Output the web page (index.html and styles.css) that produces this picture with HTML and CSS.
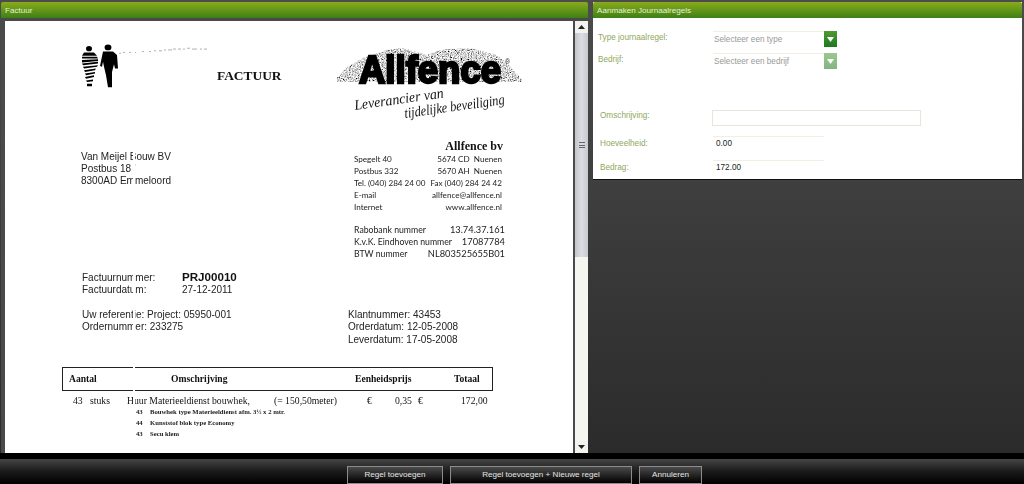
FILE: index.html
```html
<!DOCTYPE html>
<html lang="nl">
<head>
<meta charset="utf-8">
<title>Aanmaken Journaalregels</title>
<link rel="stylesheet" href="styles.css">
</head>
<body>
<div class="main">
  <section class="panel panel-doc">
    <h2 class="panel-title">Factuur</h2>
    <div class="viewer">
      <div class="doc">
        <div class="doc-head">
          <svg class="figures" width="140" height="44" viewBox="0 0 140 52" preserveAspectRatio="none">
            <g fill="#000">
              <circle cx="8" cy="5.5" r="3"/>
              <path d="M3 10 L13 10 L16 14 L1 14Z"/>
              <path d="M1 15h15l1 2h-16zM1 19l16-1v2l-16 2zM1 23l16-2 0 2-15 2zM2 27l15-2-1 2-13 2zM3 31l12-2-1 2-10 2zM4 35l10-2 0 2-9 2zM4 39l9-2 0 2-8 2zM5 43l7-1 0 2-6 1zM6 47h5v3h-5z"/>
              <circle cx="27" cy="4" r="3.4"/>
              <path d="M22 9 L32 9 L36 13 L37 29 L34 29 L33 24 L31 33 L31 51 L27 51 L25 37 L23 27 L22 21 L21 27 L19 26 Z"/>
            </g>
            <path d="M38 11h2m2-1h2m4 0h2m4 0h1m6-1h2m5 0h2m3-1h2m3 0h3m2-1h2m2 0h4m1-1h3m2 0h3m2 0h2m2-1h3m2 1h5m3 0h2m2 0h3" stroke="#aaa" stroke-width="1" fill="none"/>
          </svg>
          <div class="doc-title">FACTUUR</div>
          <svg class="logo" width="192" height="86" viewBox="0 0 192 86">
            <defs>
              <filter id="grit" x="0" y="0" width="100%" height="100%">
                <feTurbulence type="fractalNoise" baseFrequency="0.9" numOctaves="2" seed="4" result="n"/>
                <feColorMatrix in="n" type="matrix" values="2.4 0 0 0 -0.55  2.4 0 0 0 -0.55  2.4 0 0 0 -0.55  0 0 0 0 1" result="g"/>
                <feComposite in="g" in2="SourceAlpha" operator="in"/>
              </filter>
            </defs>
            <path d="M2 33 L12 22 L28 13 L52 5 L68 3 L92 10 L105 5 L135 3 L162 10 L175 21 L187 35 L187 37 L2 37Z" fill="#888" filter="url(#grit)"/>
            <text class="logo-name" x="24" y="37.5" textLength="142" lengthAdjust="spacingAndGlyphs">Allfence</text>
            <text class="logo-reg" x="170" y="19">®</text>
            <text class="logo-tag" x="20" y="65" textLength="90" lengthAdjust="spacingAndGlyphs" transform="rotate(-8 20 65)">Leverancier van</text>
            <text class="logo-tag" x="70" y="73" textLength="101" lengthAdjust="spacingAndGlyphs" transform="rotate(-8 70 73)">tijdelijke beveiliging</text>
          </svg>
        </div>
        <div class="parties">
          <div class="address">
            <p>Van Meijel Bouw BV</p>
            <p>Postbus 18 '</p>
            <p>8300AD Emmeloord</p>
          </div>
          <div class="company">
            <div class="company-name">Allfence bv</div>
            <dl class="facts">
              <div class="fact"><dt>Spegelt 40</dt><dd>5674 CD&nbsp; Nuenen</dd></div>
              <div class="fact"><dt>Postbus 332</dt><dd>5670 AH&nbsp; Nuenen</dd></div>
              <div class="fact"><dt>Tel. (040) 284 24 00</dt><dd>Fax (040) 284 24 42</dd></div>
              <div class="fact"><dt>E-mail</dt><dd>allfence@allfence.nl</dd></div>
              <div class="fact"><dt>Internet</dt><dd>www.allfence.nl</dd></div>
            </dl>
            <dl class="facts bank">
              <div class="fact"><dt>Rabobank nummer</dt><dd>13.74.37.161</dd></div>
              <div class="fact"><dt>K.v.K. Eindhoven nummer</dt><dd>17087784</dd></div>
              <div class="fact"><dt>BTW nummer</dt><dd>NL803525655B01</dd></div>
            </dl>
          </div>
        </div>
        <div class="invoice-meta">
          <div class="meta-row"><span class="meta-key">Factuurnummer:</span><strong class="meta-id">PRJ00010</strong></div>
          <div class="meta-row"><span class="meta-key">Factuurdatum:</span><span>27-12-2011</span></div>
        </div>
        <div class="refs">
          <div class="refs-left">
            <p>Uw referentie: Project: 05950-001</p>
            <p>Ordernummer: 233275</p>
          </div>
          <div class="refs-right">
            <p>Klantnummer: 43453</p>
            <p>Orderdatum: 12-05-2008</p>
            <p>Leverdatum: 17-05-2008</p>
          </div>
        </div>
        <div class="lines-head">
          <span class="col-qty">Aantal</span>
          <span class="col-desc">Omschrijving</span>
          <span class="col-price">Eenheidsprijs</span>
          <span class="col-total">Totaal</span>
        </div>
        <div class="line">
          <span class="l-qty">43</span>
          <span class="l-unit">stuks</span>
          <span class="l-desc">Huur Materieeldienst bouwhek,</span>
          <span class="l-len">(= 150,50meter)</span>
          <span class="l-eur">€</span>
          <span class="l-price">0,35</span>
          <span class="l-eur2">€</span>
          <span class="l-total">172,00</span>
        </div>
        <ul class="sublines">
          <li><span>43</span>Bouwhek type Materieeldienst afm. 3½ x 2 mtr.</li>
          <li><span>44</span>Kunststof blok type Economy</li>
          <li><span>43</span>Secu klem</li>
        </ul>
        <div class="scan-gap"></div>
      </div>
      <div class="scrollbar">
        <div class="sb-btn"><svg width="7" height="4" viewBox="0 0 7 4"><path d="M3.5 0L7 4H0Z" fill="#222"/></svg></div>
        <div class="sb-thumb"><span class="sb-grip"></span></div>
        <div class="sb-track"></div>
        <div class="sb-btn"><svg width="7" height="4" viewBox="0 0 7 4"><path d="M0 0H7L3.5 4Z" fill="#222"/></svg></div>
      </div>
    </div>
  </section>
  <section class="panel panel-form">
    <h2 class="panel-title">Aanmaken Journaalregels</h2>
    <form class="form">
      <div class="row row-select">
        <label class="lbl">Type journaalregel:</label>
        <div class="select"><span>Selecteer een type</span></div>
        <span class="drop"><svg width="7" height="5" viewBox="0 0 7 5"><path d="M0 0H7L3.5 5Z" fill="#fff"/></svg></span>
      </div>
      <div class="row row-select row-off">
        <label class="lbl">Bedrijf:</label>
        <div class="select"><span>Selecteer een bedrijf</span></div>
        <span class="drop"><svg width="7" height="5" viewBox="0 0 7 5"><path d="M0 0H7L3.5 5Z" fill="#fff"/></svg></span>
      </div>
      <div class="row row-text">
        <label class="lbl">Omschrijving:</label>
        <div class="textbox"></div>
      </div>
      <div class="row row-num">
        <label class="lbl">Hoeveelheid:</label>
        <div class="numbox">0.00</div>
      </div>
      <div class="row row-num">
        <label class="lbl">Bedrag:</label>
        <div class="numbox">172.00</div>
      </div>
    </form>
  </section>
</div>
<footer class="footer">
  <button class="btn btn-add" type="button">Regel toevoegen</button>
  <button class="btn btn-addnew" type="button">Regel toevoegen + Nieuwe regel</button>
  <button class="btn btn-cancel" type="button">Annuleren</button>
</footer>
</body>
</html>
```
FILE: styles.css
```css
* { box-sizing: border-box; }
html, body { margin: 0; height: 484px; overflow: hidden; }
body {
  display: flex;
  flex-direction: column;
  width: 1024px;
  font-family: "Liberation Sans", Arial, sans-serif;
  background: #3b3b3b;
}
p, h2, dl, dd, ul { margin: 0; padding: 0; }

.main {
  flex: 0 0 453px;
  display: flex;
  align-items: flex-start;
  gap: 5px;
  padding: 2px 2px 0 1px;
  background: linear-gradient(#4c4c4c, #2b2b2b);
}
.panel { display: flex; flex-direction: column; }
.panel-doc { width: 587px; height: 451px; }
.panel-form { width: 429px; height: 178px; background: #fff; border-bottom: 1px solid #111; }
.panel-title {
  flex: 0 0 16px;
  min-height: 0;
  padding: 1px 0 0 4px;
  font: 400 8.1px/15px "Liberation Sans", Arial, sans-serif;
  color: #e6f0d4;
  background: linear-gradient(#8aab1b, #66991a 45%, #3f7f14);
  border-radius: 2px 2px 0 0;
}

.viewer {
  flex: 1;
  display: flex;
  min-height: 0;
  padding: 3px 0 0 4px;
  background: #4a4a4a;
}
.doc {
  position: relative;
  width: 568px;
  height: 432px;
  overflow: hidden;
  background: #fff;
  color: #1c1c1c;
  filter: blur(.3px);
}
.scrollbar {
  width: 13px;
  margin-left: 2px;
  height: 432px;
  display: flex;
  flex-direction: column;
  background: #f2f2ee;
}
.sb-btn { flex: 0 0 12px; display: flex; align-items: center; justify-content: center; }
.sb-thumb {
  flex: 0 0 224px;
  display: flex;
  align-items: center;
  justify-content: center;
  background: linear-gradient(90deg, #c4c4cc, #dcdce2 50%, #c8c8d0);
}
.sb-grip { width: 6px; height: 6px; border-top: 1px solid #666; border-bottom: 1px solid #666; background: linear-gradient(#666,#666) center/100% 1px no-repeat; }
.sb-track { flex: 1; background: #f6f6f0; }

.doc-head { display: flex; align-items: flex-start; height: 100px; padding: 23px 0 0 76px; }
.figures { flex: none; }
.doc-title { flex: 0 0 65px; margin: 25px 0 0 -4px; font: 700 13.4px/14px "Liberation Serif", serif; color: #111; white-space: nowrap; }
.logo { flex: none; margin: 1px 0 0 53px; overflow: visible; }
.logo-name { font: 700 38px "Liberation Sans", sans-serif; fill: #000; stroke: #000; stroke-width: 2.4px; }
.logo-reg { font: 400 7px "Liberation Sans", sans-serif; fill: #222; }
.logo-tag { font: italic 400 14.5px "Liberation Serif", serif; fill: #111; }

.parties { display: flex; align-items: flex-start; height: 141px; padding-left: 76px; }
.address { flex: 0 0 273px; margin-top: 30px; font-size: 10px; line-height: 12px; color: #222; }
.company { flex: 0 0 157px; min-width: 0; margin-top: 18px; font: 400 8.1px/12px Lato, sans-serif; color: #222; }
.company-name { text-align: right; padding-right: 8px; font: 700 12px/14px "Liberation Serif", serif; color: #111; }
.facts { padding-right: 9px; }
.fact { display: flex; justify-content: space-between; white-space: nowrap; }
.bank { margin-top: 11px; padding-right: 6px; font-size: 8.7px; }
.bank dd { font-size: 9.3px; }

.invoice-meta { margin: 9px 0 0 77px; font-size: 10px; line-height: 12px; color: #222; }
.meta-row { display: flex; align-items: baseline; }
.meta-key { flex: 0 0 100px; }
.meta-id { font-size: 11.6px; color: #111; }

.refs { display: flex; margin: 13px 0 0 77px; font-size: 10px; line-height: 12.4px; color: #222; }
.refs-left { flex: 0 0 266px; }

.lines-head {
  display: flex;
  align-items: center;
  width: 431px;
  height: 24px;
  margin: 21px 0 0 57px;
  padding-left: 6px;
  border: 1px solid #222;
  border-width: 1.5px 1px;
  font: 700 9.6px/12px "Liberation Serif", serif;
  color: #111;
}
.col-qty { flex: 0 0 102px; }
.col-desc { flex: 0 0 184px; }
.col-price { flex: 0 0 99px; }

.line { display: flex; margin: 4px 0 0 68px; font: 400 9.7px/12px "Liberation Serif", serif; color: #111; white-space: nowrap; }
.l-qty { flex: 0 0 17px; }
.l-unit { flex: 0 0 37px; }
.l-desc { flex: 0 0 147px; }
.l-len { flex: 0 0 93px; }
.l-eur { flex: 0 0 28px; }
.l-price { flex: 0 0 23px; }
.l-eur2 { flex: 0 0 43px; }
.sublines { list-style: none; margin: -1px 0 0 131px; font: 700 6.7px/11px "Liberation Serif", serif; color: #222; }
.sublines span { display: inline-block; width: 14px; }

.scan-gap { position: absolute; left: 128px; top: 130px; width: 2px; height: 290px; background: #fff; }

.form { display: flex; flex-direction: column; padding: 13px 0 0 5px; font-size: 8.2px; }
.row { display: flex; align-items: flex-start; }
.lbl { flex: 0 0 115px; color: #8fa75e; line-height: 12px; }
.row-select { height: 22px; }
.row-select .lbl { padding-top: 1px; }
.select { width: 111px; height: 16px; border-top: 1px solid #efefe2; color: #999; line-height: 15px; padding-left: 1px; }
.drop { width: 13px; height: 16px; display: flex; align-items: center; justify-content: center; background: linear-gradient(#4f9a30, #1c7a20); }
.row-off .drop { opacity: .55; }
.row-text { margin-top: 35px; padding-left: 2px; }
.row-text .lbl { flex-basis: 112px; }
.textbox { width: 209px; height: 16px; border: 1px solid #e6e6dc; }
.row-num { height: 24px; padding-left: 2px; }
.row-text + .row-num { margin-top: 10px; }
.row-num .lbl { flex-basis: 113px; padding-top: 2px; }
.numbox { width: 111px; height: 20px; border-top: 1px solid #efefe2; padding: 1px 0 0 3px; line-height: 12px; color: #222; }

.footer {
  flex: 0 0 31px;
  display: flex;
  align-items: flex-start;
  gap: 7px;
  padding: 7px 0 0 347px;
  border-top: 6px solid #000;
  background: linear-gradient(#454545, #1a1a1a 50%, #000);
}
.btn {
  height: 18px;
  padding: 0;
  border: 1px solid #8c8c8c;
  background: linear-gradient(#4a4a4a, #000);
  color: #e4e4e4;
  font: 400 8.1px/14px "Liberation Sans", Arial, sans-serif;
}
.btn-add { width: 96px; }
.btn-addnew { width: 182px; }
.btn-cancel { width: 63px; }
```
